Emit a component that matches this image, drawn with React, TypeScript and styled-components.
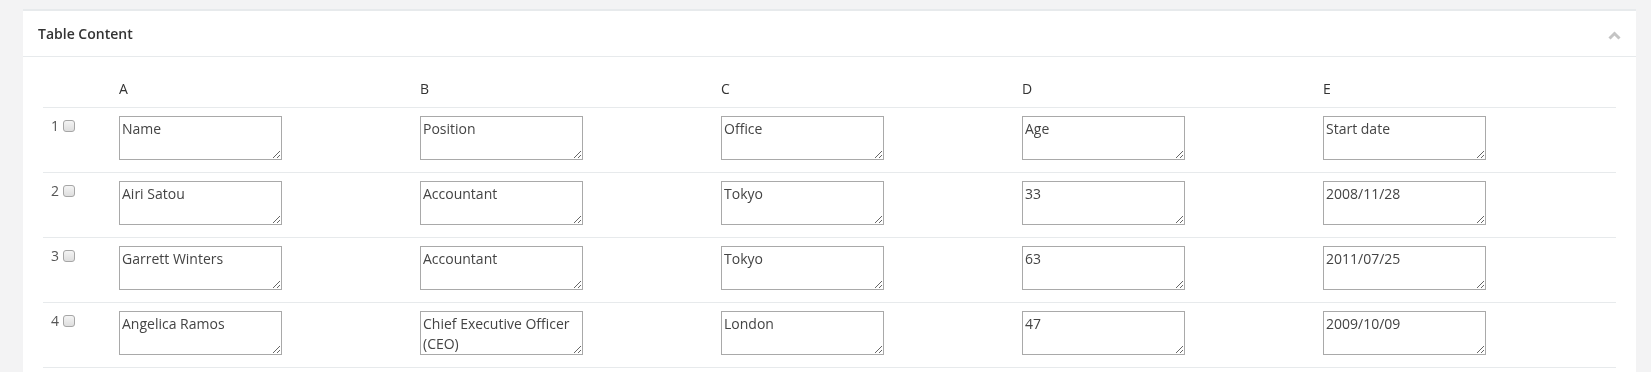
import React from 'react';
import styled, { createGlobalStyle } from 'styled-components';

const GlobalStyle = createGlobalStyle`
  html, body {
    margin: 0;
    padding: 0;
    background: #f3f3f4;
  }
  body {
    font-family: 'Open Sans', 'Liberation Sans', sans-serif;
    font-size: 14px;
    line-height: 20px;
    color: #444;
  }
`;

const Page = styled.div`
  padding: 9px 15px 0 23px;
`;

const Box = styled.div`
  background: #fff;
  border-top: 2px solid #e7eaec;
`;

const BoxTitle = styled.div`
  display: flex;
  align-items: center;
  justify-content: space-between;
  height: 46px;
  padding: 0 15px;
  border-bottom: 1px solid #e7eaec;
  box-sizing: border-box;
`;

const Heading = styled.h5`
  margin: 0;
  font-size: 14px;
  font-weight: 600;
  color: #333;
  line-height: 20px;
  padding-top: 1px;
`;

const Collapse = styled.button`
  border: none;
  background: none;
  padding: 0;
  margin-top: 4px;
  display: flex;
  cursor: pointer;
`;

const BoxContent = styled.div`
  padding: 14px 20px 20px 20px;
`;

const Table = styled.table`
  width: 100%;
  border-collapse: collapse;
  table-layout: fixed;
`;

const HeadCell = styled.th`
  text-align: left;
  font-weight: 400;
  color: #333;
  padding: 8px;
  height: 20px;
  line-height: 20px;
  border-bottom: 1px solid #e7eaec;
`;

const Cell = styled.td`
  vertical-align: top;
  padding: 8px 8px 12px;
  line-height: 20px;
  border-bottom: 1px solid #e7eaec;
  color: #555;
`;

const Check = styled.input.attrs({ type: 'checkbox' })`
  appearance: none;
  width: 12px;
  height: 12px;
  margin: 0 0 0 4px;
  border: 1px solid #a6a6a6;
  border-radius: 3px;
  background: linear-gradient(#f4f4f4, #dedede);
  vertical-align: -1px;
  box-sizing: border-box;
`;

const Field = styled.textarea`
  display: block;
  box-sizing: border-box;
  width: 163px;
  height: 44px;
  margin: 0;
  padding: 2px;
  border: 1px solid #a9a9a9;
  font: inherit;
  line-height: 20px;
  color: #444;
  background: #fff;
  outline: none;
`;

const columns = ['A', 'B', 'C', 'D', 'E'];

const rows = [
  ['Name', 'Position', 'Office', 'Age', 'Start date'],
  ['Airi Satou', 'Accountant', 'Tokyo', '33', '2008/11/28'],
  ['Garrett Winters', 'Accountant', 'Tokyo', '63', '2011/07/25'],
  ['Angelica Ramos', 'Chief Executive Officer (CEO)', 'London', '47', '2009/10/09'],
];

const ChevronUp = () => (
  <svg width="13" height="9" viewBox="0 0 13 9">
    <polyline points="1.5,7.5 6.5,2.5 11.5,7.5" fill="none" stroke="#c4c4c4" strokeWidth="3" />
  </svg>
);

const App: React.FC = () => {
  return (
    <Page>
      <GlobalStyle />
      <Box>
        <BoxTitle>
          <Heading>Table Content</Heading>
          <Collapse aria-label="collapse">
            <ChevronUp />
          </Collapse>
        </BoxTitle>
        <BoxContent>
          <Table>
            <colgroup>
              <col style={{ width: 68 }} />
              {columns.map(c => <col key={c} />)}
            </colgroup>
            <thead>
              <tr>
                <HeadCell />
                {columns.map(c => <HeadCell key={c}>{c}</HeadCell>)}
              </tr>
            </thead>
            <tbody>
              {rows.map((row, i) => (
                <tr key={i}>
                  <Cell>{i + 1}<Check /></Cell>
                  {row.map((value, j) => (
                    <Cell key={j}>
                      <Field defaultValue={value} />
                    </Cell>
                  ))}
                </tr>
              ))}
            </tbody>
          </Table>
        </BoxContent>
      </Box>
    </Page>
  );
};

export default App;
